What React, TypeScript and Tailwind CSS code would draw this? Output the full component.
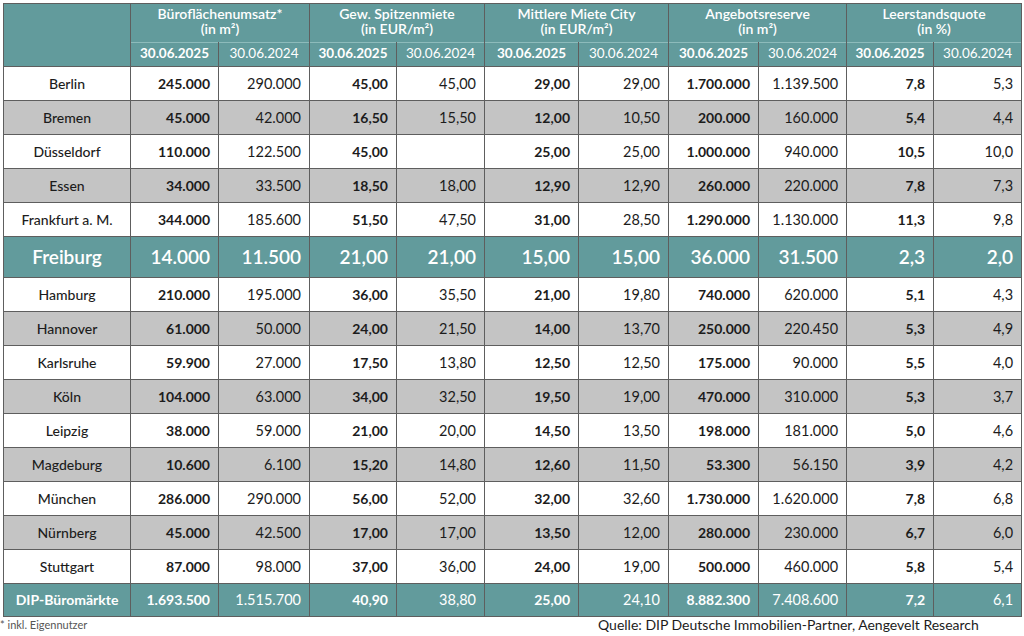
import React from "react";

type Row = { city: string; v: string[]; tone: "white" | "gray" | "hl" | "total" };

const rows: Row[] = [
  { city: "Berlin", tone: "white", v: ["245.000", "290.000", "45,00", "45,00", "29,00", "29,00", "1.700.000", "1.139.500", "7,8", "5,3"] },
  { city: "Bremen", tone: "gray", v: ["45.000", "42.000", "16,50", "15,50", "12,00", "10,50", "200.000", "160.000", "5,4", "4,4"] },
  { city: "Düsseldorf", tone: "white", v: ["110.000", "122.500", "45,00", "", "25,00", "25,00", "1.000.000", "940.000", "10,5", "10,0"] },
  { city: "Essen", tone: "gray", v: ["34.000", "33.500", "18,50", "18,00", "12,90", "12,90", "260.000", "220.000", "7,8", "7,3"] },
  { city: "Frankfurt a. M.", tone: "white", v: ["344.000", "185.600", "51,50", "47,50", "31,00", "28,50", "1.290.000", "1.130.000", "11,3", "9,8"] },
  { city: "Freiburg", tone: "hl", v: ["14.000", "11.500", "21,00", "21,00", "15,00", "15,00", "36.000", "31.500", "2,3", "2,0"] },
  { city: "Hamburg", tone: "white", v: ["210.000", "195.000", "36,00", "35,50", "21,00", "19,80", "740.000", "620.000", "5,1", "4,3"] },
  { city: "Hannover", tone: "gray", v: ["61.000", "50.000", "24,00", "21,50", "14,00", "13,70", "250.000", "220.450", "5,3", "4,9"] },
  { city: "Karlsruhe", tone: "white", v: ["59.900", "27.000", "17,50", "13,80", "12,50", "12,50", "175.000", "90.000", "5,5", "4,0"] },
  { city: "Köln", tone: "gray", v: ["104.000", "63.000", "34,00", "32,50", "19,50", "19,00", "470.000", "310.000", "5,3", "3,7"] },
  { city: "Leipzig", tone: "white", v: ["38.000", "59.000", "21,00", "20,00", "14,50", "13,50", "198.000", "181.000", "5,0", "4,6"] },
  { city: "Magdeburg", tone: "gray", v: ["10.600", "6.100", "15,20", "14,80", "12,60", "11,50", "53.300", "56.150", "3,9", "4,2"] },
  { city: "München", tone: "white", v: ["286.000", "290.000", "56,00", "52,00", "32,00", "32,60", "1.730.000", "1.620.000", "7,8", "6,8"] },
  { city: "Nürnberg", tone: "gray", v: ["45.000", "42.500", "17,00", "17,00", "13,50", "12,00", "280.000", "230.000", "6,7", "6,0"] },
  { city: "Stuttgart", tone: "white", v: ["87.000", "98.000", "37,00", "36,00", "24,00", "19,00", "500.000", "460.000", "5,8", "5,4"] },
  { city: "DIP-Büromärkte", tone: "total", v: ["1.693.500", "1.515.700", "40,90", "38,80", "25,00", "24,10", "8.882.300", "7.408.600", "7,2", "6,1"] },
];

const groups = [
  ["Büroflächenumsatz*", "(in m²)"],
  ["Gew. Spitzenmiete", "(in EUR/m²)"],
  ["Mittlere Miete City", "(in EUR/m²)"],
  ["Angebotsreserve", "(in m²)"],
  ["Leerstandsquote", "(in %)"],
];

const colWidths = ["w-[127px]", "w-[88px]", "w-[91px]", "w-[87px]", "w-[88px]", "w-[94px]", "w-[90px]", "w-[90px]", "w-[88px]", "w-[87px]", "w-[88px]"];

function rowClass(tone: Row["tone"]) {
  if (tone === "gray") return "h-[34px] bg-[#c4c4c4] text-[#1c1c1c]";
  if (tone === "hl") return "h-[41px] bg-[#629b9c] text-white";
  if (tone === "total") return "h-[33px] bg-[#629b9c] text-white";
  return "h-[34px] bg-white text-[#1c1c1c]";
}

export default function App() {
  return (
    <div className="h-[636px] w-[1024px] bg-white pl-[3px] pt-[3px] font-['Lato',sans-serif]">
      <table className="w-[1018px] table-fixed border-collapse border border-[#5e5e5e]">
        <colgroup>
          {colWidths.map((w, i) => (
            <col key={i} className={w} />
          ))}
        </colgroup>
        <thead>
          <tr className="h-[39px] bg-[#629b9c] text-white">
            <th rowSpan={2} className="border border-[#5e5e5e]"></th>
            {groups.map(([a, b]) => (
              <th key={a} colSpan={2} className="border-x border-[#5e5e5e] pb-[5px] text-center text-[14px] font-semibold leading-[15px]">
                <div>{a}</div>
                <div>{b}</div>
              </th>
            ))}
          </tr>
          <tr className="h-[24px] bg-[#629b9c] text-white">
            {groups.map(([a]) => (
              <React.Fragment key={a}>
                <th className="border-x border-t border-x-[#5e5e5e] border-t-[#8dbbbb] pb-[3px] text-center text-[13.5px] font-bold leading-[16px]">30.06.2025</th>
                <th className="border-x border-t border-x-[#5e5e5e] border-t-[#8dbbbb] pb-[3px] text-center text-[13.5px] font-normal leading-[16px]">30.06.2024</th>
              </React.Fragment>
            ))}
          </tr>
        </thead>
        <tbody>
          {rows.map((r) => {
            const hl = r.tone === "hl";
            const total = r.tone === "total";
            return (
              <tr key={r.city} className={rowClass(r.tone)}>
                <td
                  className={
                    "border border-[#5e5e5e] text-center leading-[18px] " +
                    (hl ? "text-[19px] font-semibold" : total ? "text-[14px] font-bold" : "text-[14px] font-medium")
                  }
                >
                  {r.city}
                </td>
                {r.v.map((val, i) => (
                  <td
                    key={i}
                    className={
                      "border border-[#5e5e5e] pr-[8px] text-right leading-[18px] " +
                      (hl ? "text-[19px] font-semibold" : i % 2 === 0 ? "text-[14px] font-bold" : "text-[14.5px] font-normal")
                    }
                  >
                    {val}
                  </td>
                ))}
              </tr>
            );
          })}
        </tbody>
      </table>
      <div className="flex items-start">
        <div className="-ml-[3px] w-[598px] text-[11px] leading-[16px] text-[#555]">* inkl. Eigennutzer</div>
        <div className="text-[14px] leading-[16px] text-[#1c1c1c]">Quelle: DIP Deutsche Immobilien-Partner, Aengevelt Research</div>
      </div>
    </div>
  );
}
